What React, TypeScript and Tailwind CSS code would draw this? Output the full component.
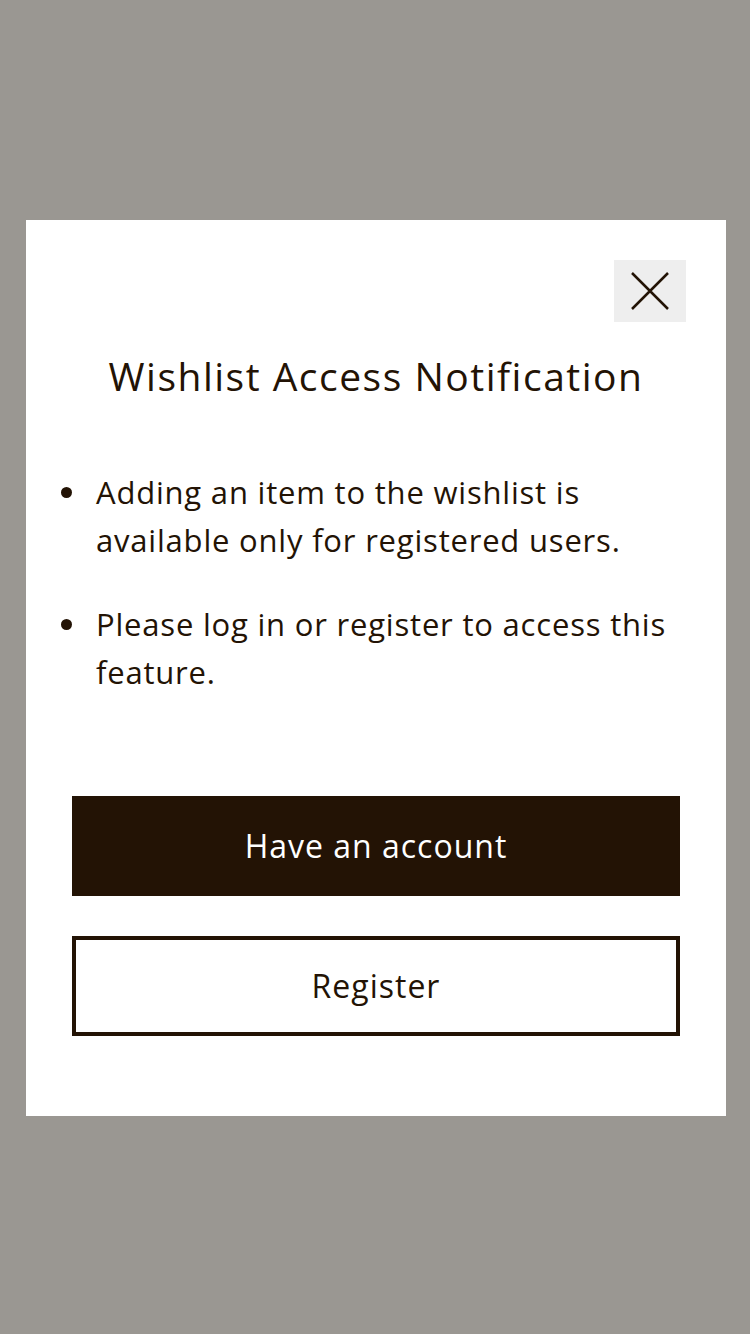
const items = [
  "Adding an item to the wishlist is available only for registered users.",
  "Please log in or register to access this feature.",
];

const App = () => {
  return (
    <div
      className="w-[750px] h-[1334px] bg-[#9a9792] pt-[220px] pl-[26px]"
      style={{ fontFamily: '"Open Sans", sans-serif' }}
    >
      <div className="w-[700px] h-[896px] bg-white flex flex-col text-[#231305]">
        <div className="flex justify-end pt-[40px] pr-[40px]">
          <button
            type="button"
            className="w-[72px] h-[62px] bg-[#eeeeee] flex items-center justify-center"
          >
            <svg width="38" height="38" viewBox="0 0 38 38" fill="none">
              <path
                d="M1 1L37 37M37 1L1 37"
                stroke="#231305"
                strokeWidth="2.5"
              />
            </svg>
          </button>
        </div>
        <h2 className="text-center text-[39px] leading-[56px] mt-[26px] tracking-[1.5px]">
          Wishlist Access Notification
        </h2>
        <ul className="flex flex-col gap-[36px] pl-[34px] pr-[30px] mt-[64px] text-[31px] leading-[48px] tracking-[0.8px]">
          {items.map((text) => (
            <li key={text} className="flex">
              <span className="w-[36px] h-[48px] flex items-center shrink-0">
                <span className="ml-[1px] w-[11px] h-[11px] rounded-full bg-[#231305]" />
              </span>
              <span>{text}</span>
            </li>
          ))}
        </ul>
        <div className="flex flex-col gap-[40px] px-[46px] mt-[100px]">
          <button
            type="button"
            className="h-[100px] bg-[#231305] text-white text-[32px] tracking-[1px]"
          >
            Have an account
          </button>
          <button
            type="button"
            className="h-[100px] border-4 border-[#231305] bg-white text-[#231305] text-[32px] tracking-[1px]"
          >
            Register
          </button>
        </div>
      </div>
    </div>
  );
};

export default App;
